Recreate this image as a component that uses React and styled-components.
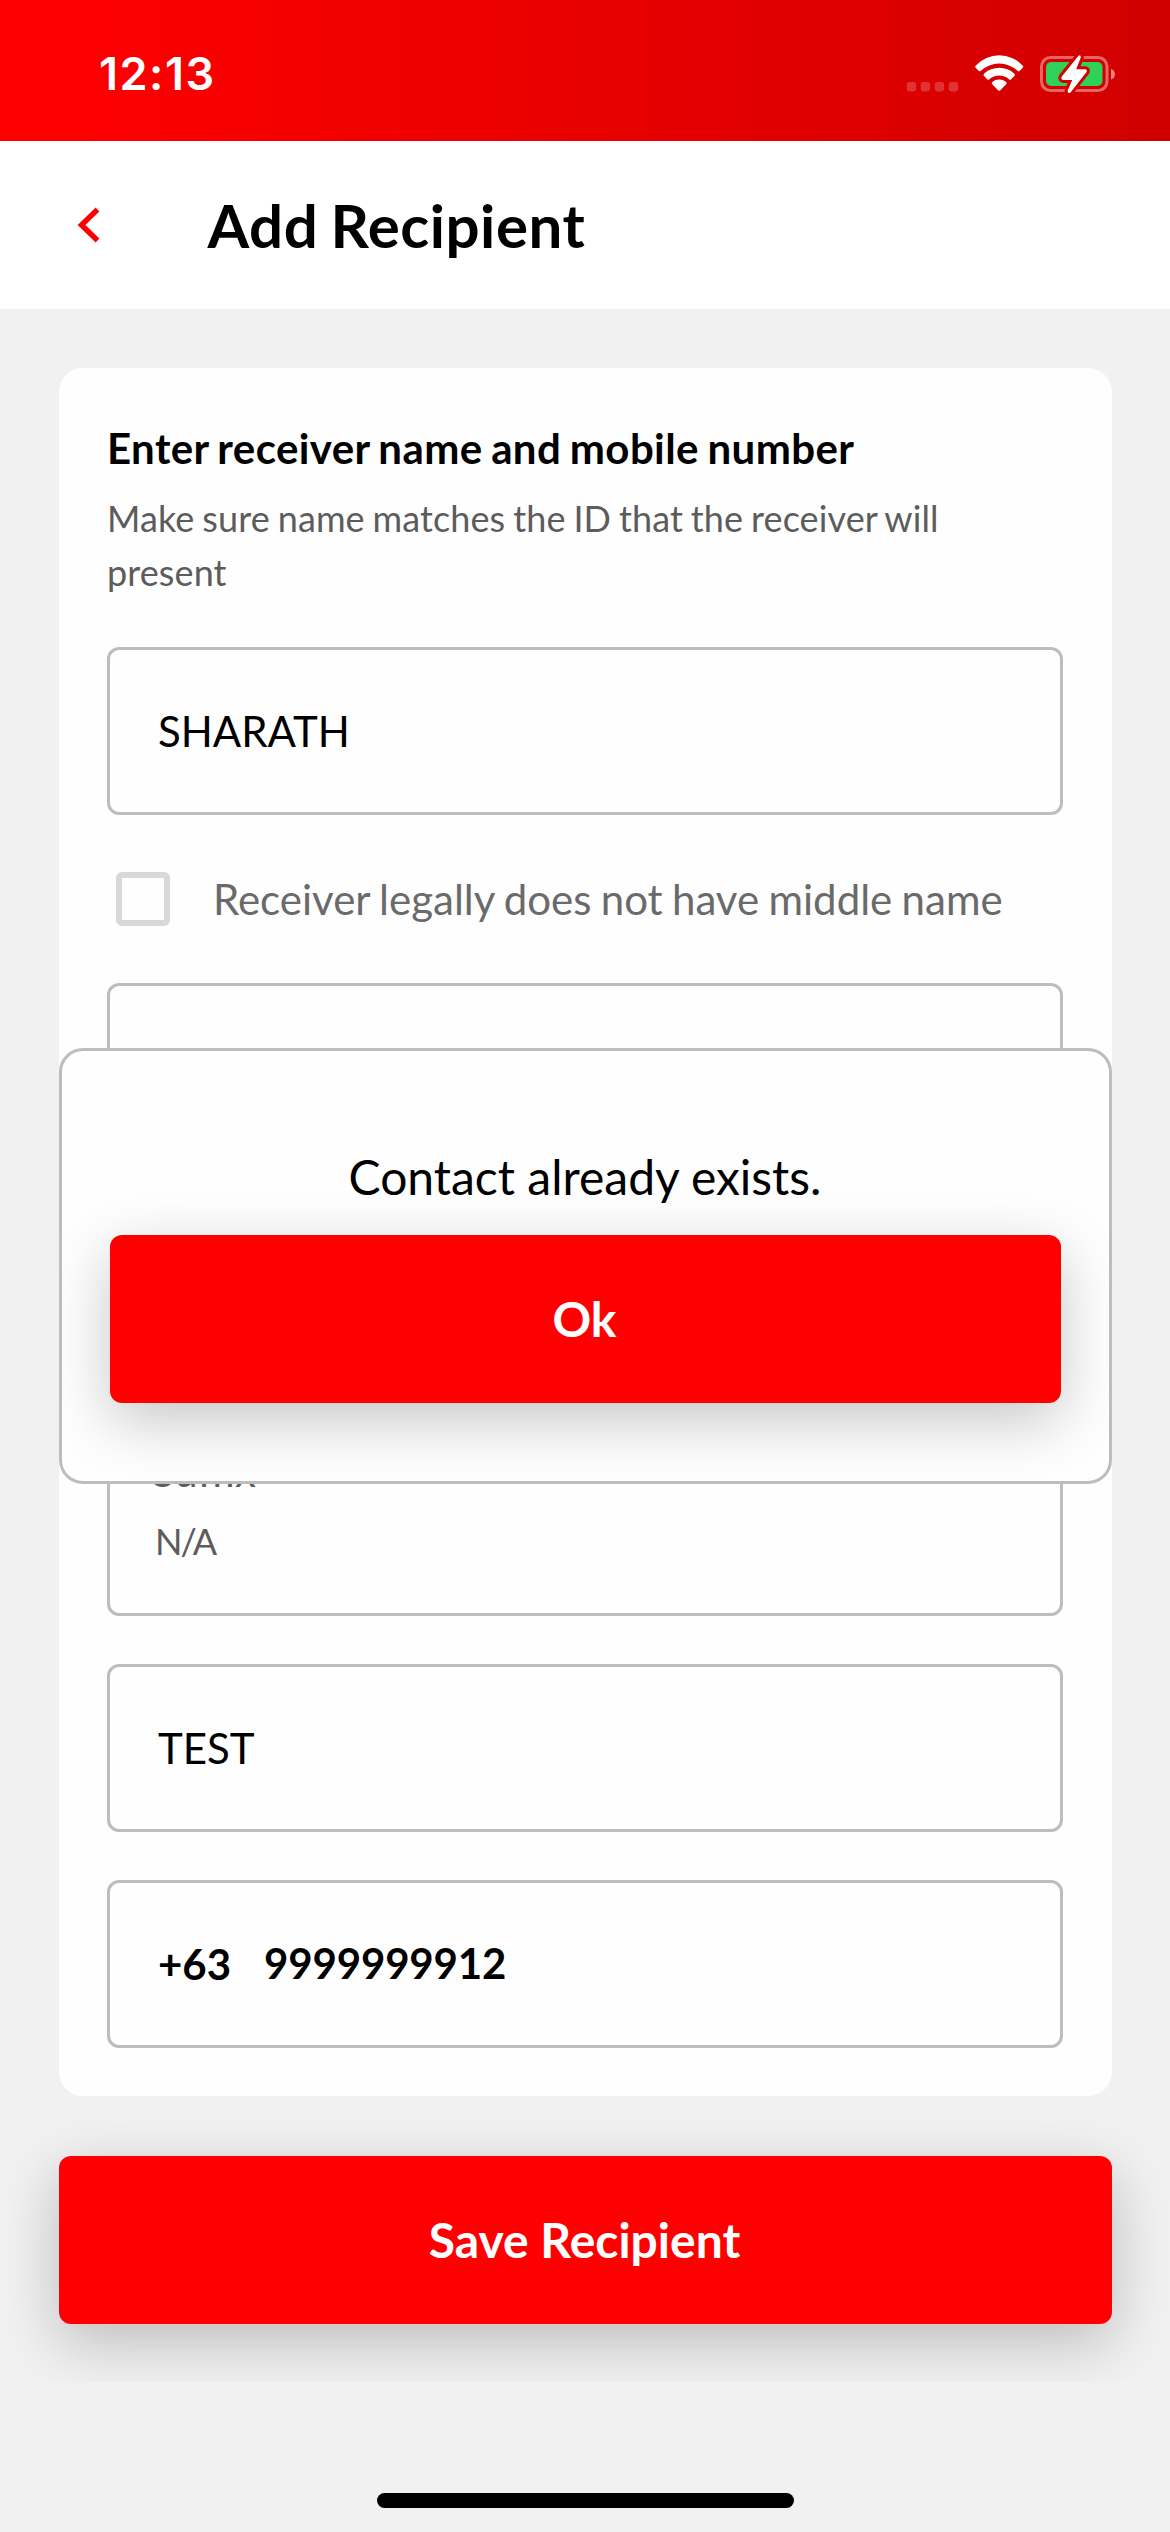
import React from "react";
import styled, { createGlobalStyle } from "styled-components";

const GlobalStyle = createGlobalStyle`
  * { box-sizing: border-box; }
  html, body { margin: 0; padding: 0; background: #f1f1f1; }
  body { font-family: Lato, "Open Sans", sans-serif; color: #000; }
`;

const Screen = styled.div`
  position: relative;
  display: flex;
  flex-direction: column;
  width: 1170px;
  height: 2532px;
  overflow: hidden;
  background: #f1f1f1;
`;

const StatusBar = styled.div`
  flex: none;
  display: flex;
  align-items: center;
  justify-content: space-between;
  height: 141px;
  padding: 7px 55px 0 99px;
  background: linear-gradient(90deg, #ff0000 3%, #d00000 100%);
`;

const Clock = styled.span`
  font: 600 45px/60px Inter, Roboto, sans-serif;
  letter-spacing: 1.5px;
  color: #fff;
`;

const StatusIcons = styled.svg`
  display: block;
  width: 209px;
  height: 44px;
`;

const Header = styled.header`
  flex: none;
  display: flex;
  align-items: center;
  height: 168px;
  padding-left: 77px;
  background: #fff;
`;

const BackIcon = styled.svg`
  width: 24px;
  height: 36px;
  margin-right: 106.5px;
`;

const Title = styled.h1`
  margin: 0;
  font-size: 60px;
  font-weight: 700;
  line-height: 168px;
  letter-spacing: 0.55px;
  word-spacing: -2.9px;
`;

const Content = styled.main`
  flex: none;
  height: 2073px;
  padding: 59px 58.5px 0;
  overflow: hidden;
`;

const Card = styled.section`
  display: flex;
  flex-direction: column;
  padding: 55px 48.5px 48px;
  border-radius: 24px;
  background: #fefefe;
`;

const Heading = styled.h2`
  margin: 0 0 18px;
  font-size: 42px;
  font-weight: 700;
  line-height: 50px;
  letter-spacing: 0.4px;
  word-spacing: -2px;
  white-space: nowrap;
`;

const Hint = styled.p`
  margin: 0 0 48px;
  font-size: 36px;
  line-height: 54px;
  letter-spacing: 0.1px;
  word-spacing: -1.4px;
  color: #5c5c5c;
`;

const Field = styled.div`
  display: flex;
  align-items: center;
  height: 168px;
  margin-bottom: ${(p) => (p.$flush ? 0 : 48)}px;
  padding-left: 48px;
  border: 3px solid #bdbdbd;
  border-radius: 12px;
  font-size: 42px;
`;

const PhoneField = styled(Field)`
  gap: 33px;
  padding-bottom: 1px;
  font-weight: 700;
`;

const PhoneNumber = styled.span`
  padding-bottom: 2px;
  letter-spacing: -0.15px;
`;

const SelectField = styled(Field)`
  flex-direction: column;
  align-items: flex-start;
  gap: 16px;
  height: 201px;
  padding: 26px 0 0 42px;
  line-height: 54px;
  color: #5c5c5c;
`;

const SelectValue = styled.span`
  margin-left: 3px;
  font-size: 36px;
  letter-spacing: -2px;
`;

const CheckRow = styled.label`
  display: flex;
  align-items: center;
  gap: 43px;
  height: 168px;
  padding-left: 9px;
  font-size: 42px;
  word-spacing: -1.4px;
  color: #6a6a6a;
  white-space: nowrap;
`;

const Checkbox = styled.span`
  width: 54px;
  height: 54px;
  border: 6px solid #d8d8d8;
  border-radius: 6px;
`;

const Button = styled.button`
  display: block;
  width: 100%;
  height: 168px;
  margin: ${(p) => p.$top || 0}px 0 0;
  padding: 0 1px 0 0;
  border: 0;
  border-radius: 12px;
  background: #ff0000;
  box-shadow: 0 18px 60px rgba(0, 0, 0, 0.22);
  color: #fff;
  font: 700 48px/168px Lato, sans-serif;
`;

const Dialog = styled.div`
  position: absolute;
  top: 1048px;
  left: 58.5px;
  right: 58.5px;
  height: 436px;
  padding: 90px 48px 0;
  border: 3px solid #bdbdbd;
  border-radius: 24px;
  background: #fefefe;
  overflow: hidden;
`;

const Message = styled.p`
  margin: 0 0 22px;
  text-align: center;
  font-size: 48px;
  line-height: 72px;
`;

const HomeArea = styled.footer`
  flex: 1;
  display: flex;
  justify-content: center;
  align-items: flex-end;
  padding-bottom: 24px;
`;

const HomeIndicator = styled.div`
  width: 417px;
  height: 15px;
  border-radius: 8px;
  background: #000;
`;

const BOLT = "M172.5 3.8 L155.8 24.5 Q154.4 27.6 157.5 28 H166.2 L161.6 38.8 Q161.5 42 164.5 40.5 L180.6 20 Q181.6 17.6 179 17.2 H170.2 L174.8 5.4 Q174.8 2 172.5 3.8 Z";

function DeviceStatus() {
  return (
    <StatusIcons viewBox="0 0 209 44">
      <g fill="#fff" fillOpacity="0.2">
        {[0.7, 14.7, 28.7, 42.7].map((x) => (
          <rect key={x} x={x} y="30" width="9.4" height="9.4" rx="2.8" />
        ))}
      </g>
      <g fill="#fff">
        <path d="M69.8 13.4 A32 32 0 0 1 116.6 13.4 Q117.8 14.6 116.7 15.8 L113.8 18.7 Q112.7 19.7 111.5 18.7 A27 27 0 0 0 74.9 18.7 Q73.7 19.7 72.6 18.7 L69.7 15.8 Q68.6 14.6 69.8 13.4 Z" />
        <path d="M78 21.7 A22.5 22.5 0 0 1 108.4 21.7 Q109.5 22.9 108.4 24 L105.2 27.2 Q104.2 28.2 103 27.2 A15 15 0 0 0 83.4 27.2 Q82.2 28.2 81.2 27.2 L78 24 Q76.9 22.9 78 21.7 Z" />
        <path d="M86.3 30.1 A10.8 10.8 0 0 1 100.1 30.1 Q101.3 31.2 100.2 32.3 L94.3 38.3 Q93.2 39.3 92.1 38.3 L86.2 32.3 Q85.1 31.2 86.3 30.1 Z" />
      </g>
      <defs>
        <mask id="bolt-gap" maskUnits="userSpaceOnUse" x="130" y="0" width="80" height="44">
          <rect x="130" y="0" width="80" height="44" fill="#fff" />
          <path d={BOLT} fill="#000" stroke="#000" strokeWidth="6" strokeLinejoin="round" />
        </mask>
      </defs>
      <g mask="url(#bolt-gap)">
        <rect x="135.5" y="5.5" width="65.5" height="33" rx="9" fill="none" stroke="#fff" strokeOpacity="0.4" strokeWidth="3" />
        <rect x="140" y="10" width="56.5" height="24" rx="5" fill="#30d158" />
      </g>
      <path d="M205 16.8 Q209 18.5 209 22.2 Q209 26 205 27.6 Z" fill="#fff" fillOpacity="0.5" />
      <path d={BOLT} fill="#fff" />
    </StatusIcons>
  );
}

export default function App() {
  return (
    <>
      <GlobalStyle />
      <Screen>
        <StatusBar>
          <Clock>12:13</Clock>
          <DeviceStatus />
        </StatusBar>
        <Header>
          <BackIcon viewBox="0 0 24 36">
            <path d="M20.5 2.5 L4.5 18 L20.5 33.5" fill="none" stroke="#ff0000" strokeWidth="5.4" />
          </BackIcon>
          <Title>Add Recipient</Title>
        </Header>
        <Content>
          <Card>
            <Heading>Enter receiver name and mobile number</Heading>
            <Hint>Make sure name matches the ID that the receiver will present</Hint>
            <Field $flush>SHARATH</Field>
            <CheckRow>
              <Checkbox />
              Receiver legally does not have middle name
            </CheckRow>
            <Field />
            <Field />
            <SelectField>
              <span>Suffix</span>
              <SelectValue>N/A</SelectValue>
            </SelectField>
            <Field>TEST</Field>
            <PhoneField $flush>
              <span>+63</span>
              <PhoneNumber>9999999912</PhoneNumber>
            </PhoneField>
          </Card>
          <Button $top={60}>Save Recipient</Button>
        </Content>
        <HomeArea>
          <HomeIndicator />
        </HomeArea>
        <Dialog>
          <Message>Contact already exists.</Message>
          <Button>Ok</Button>
        </Dialog>
      </Screen>
    </>
  );
}
